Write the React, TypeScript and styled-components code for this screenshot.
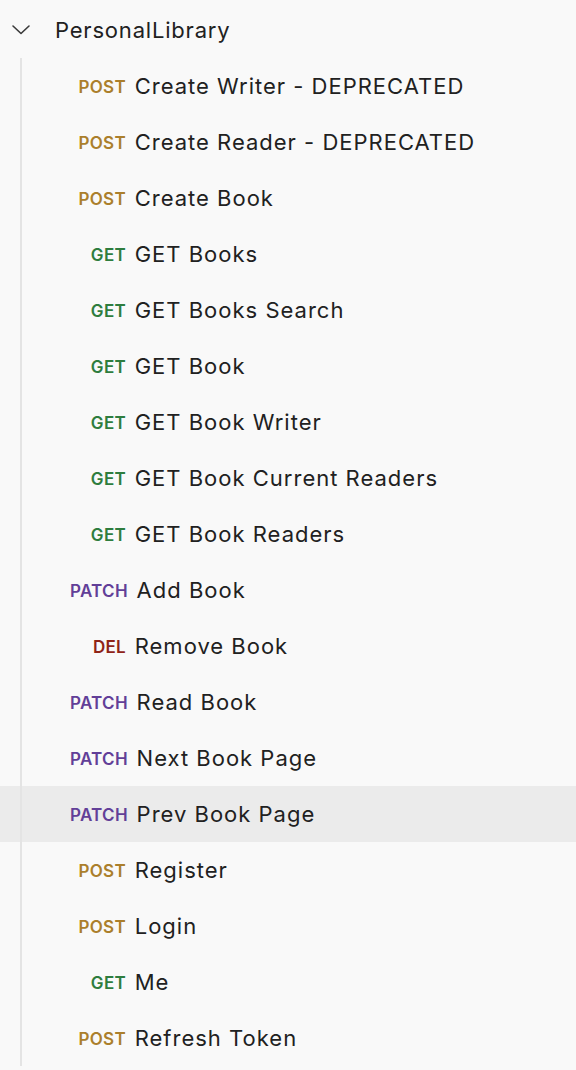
import React from 'react'
import styled, { createGlobalStyle } from 'styled-components'

type Method = 'POST' | 'GET' | 'PATCH' | 'DEL'

interface RequestItem {
    method: Method,
    name: string,
    active?: boolean
}

const requests: RequestItem[] = [
    { method: 'POST', name: 'Create Writer - DEPRECATED' },
    { method: 'POST', name: 'Create Reader - DEPRECATED' },
    { method: 'POST', name: 'Create Book' },
    { method: 'GET', name: 'GET Books' },
    { method: 'GET', name: 'GET Books Search' },
    { method: 'GET', name: 'GET Book' },
    { method: 'GET', name: 'GET Book Writer' },
    { method: 'GET', name: 'GET Book Current Readers' },
    { method: 'GET', name: 'GET Book Readers' },
    { method: 'PATCH', name: 'Add Book' },
    { method: 'DEL', name: 'Remove Book' },
    { method: 'PATCH', name: 'Read Book' },
    { method: 'PATCH', name: 'Next Book Page' },
    { method: 'PATCH', name: 'Prev Book Page', active: true },
    { method: 'POST', name: 'Register' },
    { method: 'POST', name: 'Login' },
    { method: 'GET', name: 'Me' },
    { method: 'POST', name: 'Refresh Token' },
]

const methodColors: Record<Method, string> = {
    POST: '#ab7f2c',
    GET: '#2e7d3e',
    PATCH: '#623f98',
    DEL: '#8f2418',
}

const GlobalStyle = createGlobalStyle`
    body {
        margin: 0;
        background: #f9f9f9;
        font-family: Inter, 'Noto Sans', sans-serif;
        color: #212121;
    }
`

const Sidebar = () => {
    return (
        <Wrapper>
            <FolderRow>
                <Chevron width="20" height="20" viewBox="0 0 20 20">
                    <path d="M2 6 L10 13.5 L18 6" fill="none" stroke="#3a3a3a" strokeWidth="1.6" strokeLinecap="round" strokeLinejoin="round" />
                </Chevron>
                <FolderName>PersonalLibrary</FolderName>
            </FolderRow>
            <Children>
                {requests.map((r, i) => (
                    <RequestRow key={i} $active={r.active}>
                        <MethodLabel $color={methodColors[r.method]}>{r.method}</MethodLabel>
                        <RequestName>{r.name}</RequestName>
                    </RequestRow>
                ))}
            </Children>
        </Wrapper>
    )
}

const Wrapper = styled.div`
    width: 576px;
    height: 1070px;
    padding-top: 2px;
    box-sizing: border-box;
`

const FolderRow = styled.div`
    display: flex;
    align-items: center;
    height: 56px;
    padding-left: 11px;
`

const Chevron = styled.svg`
    flex-shrink: 0;
`

const FolderName = styled.span`
    margin-left: 24px;
    font-size: 22px;
    letter-spacing: 0.8px;
`

const Children = styled.div`
    position: relative;
    &::before {
        content: '';
        position: absolute;
        left: 20px;
        top: 0;
        bottom: 0;
        width: 2px;
        background: #e4e4e4;
        z-index: 1;
    }
`

const RequestRow = styled.div<{ $active?: boolean }>`
    display: flex;
    align-items: center;
    gap: 9px;
    height: 56px;
    padding-left: 70px;
    background: ${p => p.$active ? '#ebebeb' : 'transparent'};
`

const MethodLabel = styled.span<{ $color: string }>`
    min-width: 56px;
    text-align: right;
    font-size: 17px;
    font-weight: 600;
    letter-spacing: 0.3px;
    margin-right: -0.3px;
    color: ${p => p.$color};
    padding-top: 1px;
`

const RequestName = styled.span`
    font-size: 22px;
    letter-spacing: 1px;
    white-space: nowrap;
`

export default function App() {
    return (
        <>
            <GlobalStyle />
            <Sidebar />
        </>
    )
}
